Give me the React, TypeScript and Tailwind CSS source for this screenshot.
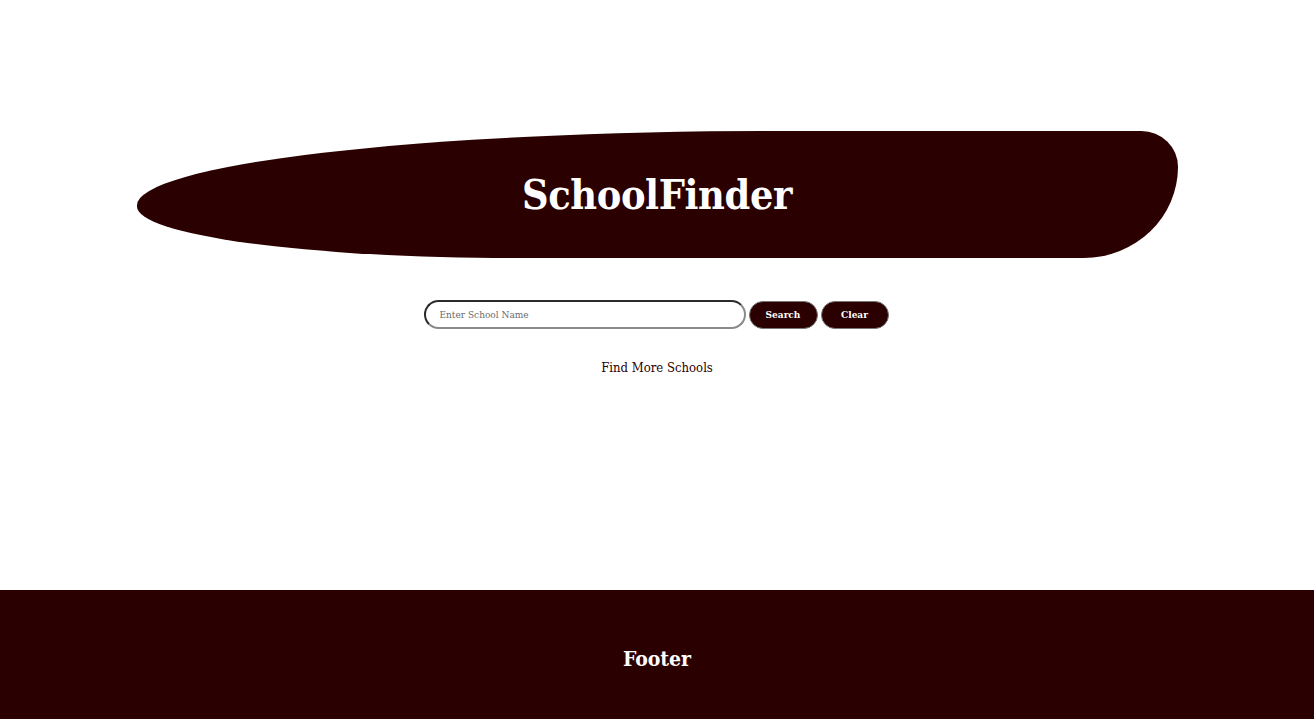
import React, { useState } from 'react';

const serif = "font-['DejaVu_Serif_Condensed','DejaVu_Serif',serif]";

export default function App() {
  const [query, setQuery] = useState('');

  return (
    <div className={`flex h-screen flex-col bg-white ${serif}`}>
      <main className="flex-1 pt-[131px]">
        <header className="mx-auto flex h-[127px] w-[1041px] items-center justify-center rounded-[640px_37px_95px_380px/75px_36px_92px_52px] bg-[#2b0000]">
          <h1 className="pt-[2px] text-[41px] font-bold tracking-[-0.4px] text-white">SchoolFinder</h1>
        </header>

        <div className="mt-[42px] flex items-center justify-center gap-[3px] pr-[2px]">
          <input
            type="text"
            value={query}
            onChange={(e) => setQuery(e.target.value)}
            placeholder="Enter School Name"
            className="h-[29px] w-[322px] rounded-full border-2 border-t-[#2b2b2b] border-l-[#2b2b2b] border-r-[#8a8a8a] border-b-[#8a8a8a] px-[14px] text-[10px] text-black outline-none placeholder:text-[#6b6b6b]"
          />
          <button className="h-[28px] w-[69px] rounded-full border border-[#777] bg-[#2b0000] text-[10px] font-bold text-white">
            Search
          </button>
          <button
            onClick={() => setQuery('')}
            className="h-[28px] w-[68px] rounded-full border border-[#777] bg-[#2b0000] text-[10px] font-bold text-white"
          >
            Clear
          </button>
        </div>

        <p className="mt-[29px] text-center text-[13px] font-medium text-[#2b0000]">Find More Schools</p>
      </main>

      <footer className="flex h-[129px] items-center justify-center bg-[#2b0000] pt-[8px]">
        <h2 className="text-[21px] font-bold text-white">Footer</h2>
      </footer>
    </div>
  );
}
